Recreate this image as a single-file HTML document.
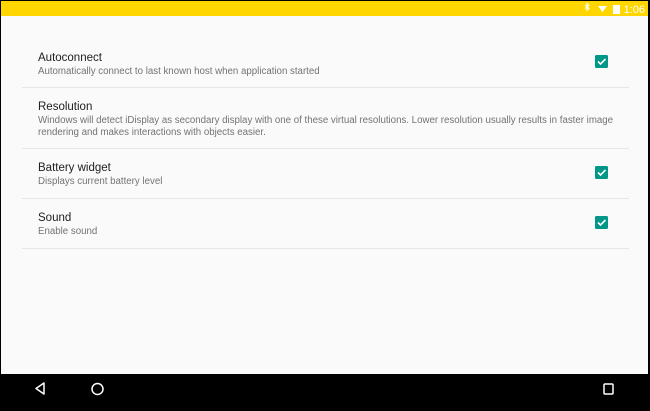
<!DOCTYPE html>
<html><head><style>
*{margin:0;padding:0;box-sizing:border-box}
body{width:650px;height:406px;overflow:hidden;background:#000;font-family:"Liberation Sans",sans-serif;position:relative}
#scr{position:absolute;left:1px;top:1px;width:647px;height:373px;background:#fafafa}
#sb{position:absolute;left:0;top:0;width:647px;height:15px;background:#ffd600;color:#fff;font-size:10px}
.t{font-size:11.5px;color:#212121;position:absolute;white-space:nowrap}
.s{font-size:9.7px;color:#737373;position:absolute;white-space:nowrap;line-height:12px}
.d{position:absolute;left:21px;width:607px;height:1px;background:#e6e6e6}
.cb{position:absolute;left:594px;width:13px;height:13px;background:#009688;border-radius:1.5px}
#nav{position:absolute;left:0;top:374px;width:650px;height:32px;background:#000}
</style></head><body>
<div id="scr">
<div id="sb">
<svg style="position:absolute;left:0;top:0" width="647" height="15">
<path d="M584 4 l4 3.5 -2 1.8 v-7 l2 1.8 -4 3.5" stroke="#fff" stroke-width="1" fill="none"/>
<path d="M597 5 h9 l-4.5 6 z" fill="#fff"/>
<rect x="612" y="4" width="7" height="9" fill="#fff"/>
<text x="644" y="12" font-size="11" fill="#fff" text-anchor="end" font-family="Liberation Sans">1:06</text>
</svg>
</div>
<div class="t" style="left:37px;top:51px">Autoconnect</div>
<div class="s" style="left:37px;top:65px">Automatically connect to last known host when application started</div>
<div class="cb" style="top:54px"></div>
<div class="d" style="top:86px"></div>
<div class="t" style="left:37px;top:100px">Resolution</div>
<div class="s" style="left:37px;top:114px">Windows will detect iDisplay as secondary display with one of these virtual resolutions. Lower resolution usually results in faster image<br>rendering and makes interactions with objects easier.</div>
<div class="d" style="top:147px"></div>
<div class="t" style="left:37px;top:161px">Battery widget</div>
<div class="s" style="left:37px;top:175px">Displays current battery level</div>
<div class="cb" style="top:165px"></div>
<div class="d" style="top:197px"></div>
<div class="t" style="left:37px;top:211px">Sound</div>
<div class="s" style="left:37px;top:225px">Enable sound</div>
<div class="cb" style="top:215px"></div>
<div class="d" style="top:247px"></div>
<svg style="position:absolute;left:0;top:0" width="647" height="373">
<g stroke="#fff" stroke-width="1.6" fill="none">
<path d="M597 60.5 l2.5 2.5 5-5"/>
<path d="M597 171.5 l2.5 2.5 5-5"/>
<path d="M597 221.5 l2.5 2.5 5-5"/>
</g>
</svg>
</div>
<div id="nav">
<svg width="650" height="32">
<g stroke="#fff" stroke-width="1.5" fill="none">
<path d="M44 9 v11 l-8 -5.5 z" stroke-linejoin="round"/>
<circle cx="97.5" cy="15" r="5.5"/>
<rect x="604" y="10" width="9" height="10" rx="1"/>
</g>
</svg>
</div>
</body></html>
